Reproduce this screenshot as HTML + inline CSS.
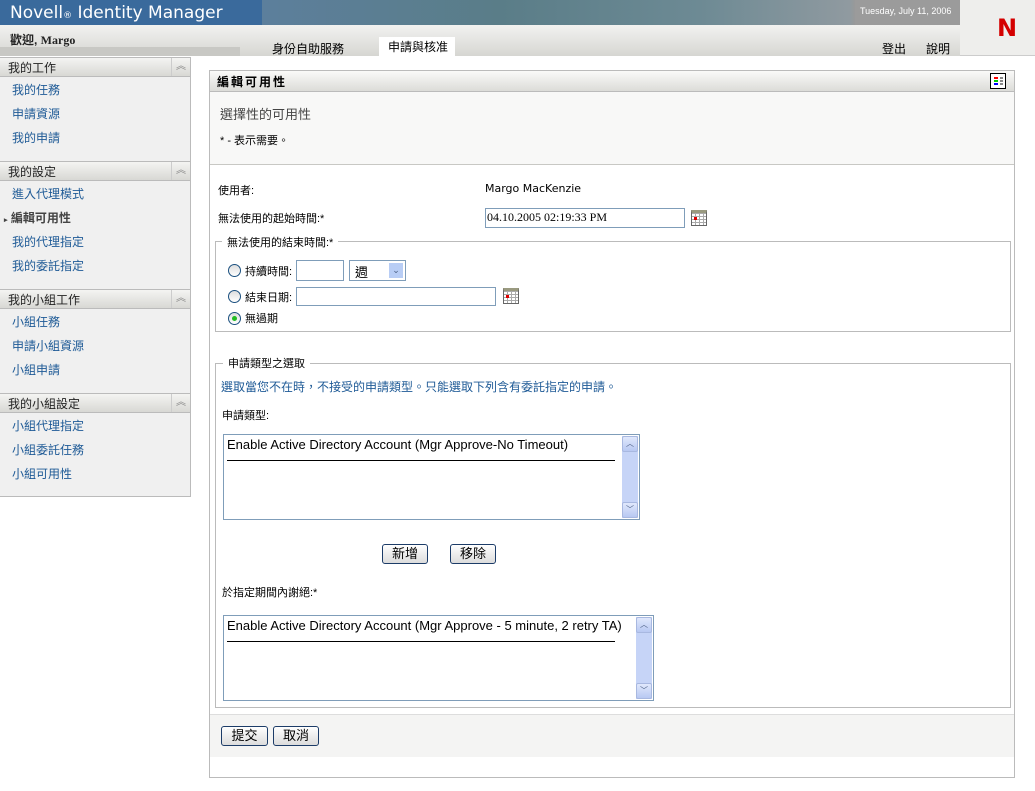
<!DOCTYPE html>
<html><head><meta charset="utf-8">
<style>
*{margin:0;padding:0;box-sizing:border-box}
body{width:1035px;height:791px;position:relative;background:#fff;font-family:"Liberation Sans","Noto Sans CJK TC",sans-serif;font-size:12px;color:#000;overflow:hidden}
.a{position:absolute;white-space:nowrap}
.lnk{color:#1e5a96}
.sh{position:absolute;left:0;width:190px;height:20px;background:linear-gradient(#f4f4f2,#d8d8d4);border-top:1px solid #bbb;border-bottom:1px solid #bbb}
.sh span{position:absolute;left:8px;top:1px;color:#222}
.sh i{position:absolute;right:0;top:0;width:19px;height:18px;border-left:1px solid #ccc;font-style:normal;color:#888;font-size:10px;text-align:center;line-height:18px}
.btn{position:absolute;height:20px;border:1px solid #1c3c68;border-radius:3px;background:linear-gradient(#fff,#dcdcdc);text-align:center;line-height:18px;font-size:13px}
.rad{position:absolute;width:13px;height:13px;border:1px solid #1c5180;border-radius:50%;background:linear-gradient(#ddd,#fff)}
.inp{position:absolute;border:1px solid #7f9db9;background:#fff}
.cal{position:absolute;width:16px;height:16px;border:1px solid #666;border-top:3px solid #9a9a80;background:repeating-linear-gradient(90deg,transparent 0 3px,#aaa 3px 4px),repeating-linear-gradient(0deg,#fff 0 2px,#aaa 2px 3px)}
.cal b{position:absolute;left:2px;top:4px;width:3px;height:3px;background:#d00}
.sb{position:absolute;right:1px;top:1px;bottom:1px;width:16px;background:#c6d4f7}
.sb .u,.sb .d{position:absolute;left:0;width:16px;height:16px;background:linear-gradient(#e0e8fc,#b8c8f2);border:1px solid #a8b8e0;border-radius:2px;color:#4d6185;font-size:8px;text-align:center;line-height:14px}
.sb .u{top:0}.sb .d{bottom:0}
</style></head><body>
<div class="a" style="left:0;top:0;width:960px;height:25px;background:linear-gradient(90deg,#3a6a9c 0,#3a6a9c 262px,#5c7f9c 262px,#5a7d88 500px,#6d8a94 700px,#909aa0 850px,#999 855px)"></div>
<div class="a" style="left:855px;top:0;width:105px;height:25px;background:#9b9b9b"></div>
<div class="a" style="left:10px;top:3px;color:#fff;font-size:17px;font-family:'DejaVu Sans',sans-serif">Novell<span style="font-size:9px">®</span> Identity Manager</div>
<div class="a" style="left:860px;top:6px;color:#fff;font-size:9px">Tuesday, July 11, 2006</div>
<div class="a" style="left:0;top:25px;width:960px;height:31px;background:linear-gradient(#f2f2f0,#d6d6d2)"></div>
<div class="a" style="left:0;top:47px;width:240px;height:9px;background:#c8c8c4"></div>
<div class="a" style="left:960px;top:0;width:75px;height:56px;background:#eeeeec;border-bottom:1px solid #ccc"></div>
<div class="a" style="left:997px;top:14px;color:#d40000;font-size:24px;font-weight:bold;font-family:'DejaVu Sans',sans-serif">N</div>
<div class="a" style="left:10px;top:31px;font-weight:bold;font-size:12px;color:#222">歡迎, <span style="font-family:'Liberation Serif',serif">Margo</span></div>
<div class="a" style="left:272px;top:40px;font-size:12px">身份自助服務</div>
<div class="a" style="left:379px;top:37px;width:76px;height:20px;background:#fff"></div>
<div class="a" style="left:388px;top:38px;font-size:12px">申請與核准</div>
<div class="a" style="left:882px;top:40px">登出</div>
<div class="a" style="left:926px;top:40px">說明</div>
<div class="a" style="left:0;top:57px;width:191px;height:440px;background:#f0f0f0;border-right:1px solid #bbb;border-bottom:1px solid #bbb"></div>
<div class="sh" style="top:57px"><span>我的工作</span><i>︽</i></div>
<div class="a lnk" style="left:12px;top:81px">我的任務</div>
<div class="a lnk" style="left:12px;top:105px">申請資源</div>
<div class="a lnk" style="left:12px;top:129px">我的申請</div>
<div class="sh" style="top:161px"><span>我的設定</span><i>︽</i></div>
<div class="a lnk" style="left:12px;top:185px">進入代理模式</div>
<div class="a" style="left:4px;top:209px;font-weight:bold;color:#444"><span style="font-size:7px">▸</span> 編輯可用性</div>
<div class="a lnk" style="left:12px;top:233px">我的代理指定</div>
<div class="a lnk" style="left:12px;top:257px">我的委託指定</div>
<div class="sh" style="top:289px"><span>我的小組工作</span><i>︽</i></div>
<div class="a lnk" style="left:12px;top:313px">小組任務</div>
<div class="a lnk" style="left:12px;top:337px">申請小組資源</div>
<div class="a lnk" style="left:12px;top:361px">小組申請</div>
<div class="sh" style="top:393px"><span>我的小組設定</span><i>︽</i></div>
<div class="a lnk" style="left:12px;top:417px">小組代理指定</div>
<div class="a lnk" style="left:12px;top:441px">小組委託任務</div>
<div class="a lnk" style="left:12px;top:465px">小組可用性</div>
<div class="a" style="left:209px;top:70px;width:806px;height:708px;border:1px solid #bbb;background:#fff"></div>
<div class="a" style="left:210px;top:71px;width:804px;height:21px;background:linear-gradient(#fafaf9,#dcdcd8);border-bottom:1px solid #bbb"></div>
<div class="a" style="left:217px;top:73px;font-weight:bold;letter-spacing:2px">編輯可用性</div>
<div class="a" style="left:990px;top:73px;width:16px;height:16px;border:1px solid #000;background:#fff">
<div class="a" style="left:3px;top:3px;width:4px;height:2px;background:#f00"></div><div class="a" style="left:9px;top:3px;width:3px;height:2px;background:#888"></div>
<div class="a" style="left:3px;top:6px;width:4px;height:2px;background:#0c0"></div><div class="a" style="left:9px;top:6px;width:3px;height:2px;background:#888"></div>
<div class="a" style="left:3px;top:9px;width:4px;height:2px;background:#00f"></div><div class="a" style="left:9px;top:9px;width:3px;height:2px;background:#888"></div></div>
<div class="a" style="left:210px;top:92px;width:804px;height:73px;background:#f8f8f7;border-bottom:1px solid #c8c8c4"></div>
<div class="a" style="left:220px;top:104px;font-size:13px;color:#444">選擇性的可用性</div>
<div class="a" style="left:220px;top:132px;font-size:11px">* - 表示需要。</div>
<div class="a" style="left:218px;top:182px;font-size:11px">使用者:</div>
<div class="a" style="left:485px;top:182px;font-size:11px;font-family:'DejaVu Sans',sans-serif">Margo MacKenzie</div>
<div class="a" style="left:218px;top:210px;font-size:11px">無法使用的起始時間:*</div>
<div class="inp" style="left:485px;top:208px;width:200px;height:20px"><span class="a" style="left:1px;top:1px;font-family:'Liberation Serif',serif;font-size:12px">04.10.2005 02:19:33 PM</span></div>
<div class="cal" style="left:691px;top:210px"><b></b></div>
<div class="a" style="left:215px;top:241px;width:796px;height:91px;border:1px solid #bbb"></div>
<div class="a" style="left:222px;top:234px;background:#fff;padding:0 5px;font-size:11px">無法使用的結束時間:*</div>
<div class="rad" style="left:228px;top:264px"></div>
<div class="a" style="left:245px;top:263px;font-size:11px">持續時間:</div>
<div class="inp" style="left:296px;top:260px;width:48px;height:21px"></div>
<div class="inp" style="left:349px;top:260px;width:57px;height:21px"><span class="a" style="left:5px;top:1px;font-size:13px">週</span><div class="a" style="right:2px;top:2px;width:14px;height:15px;background:#b8cdf5;color:#4d6185;font-size:9px;text-align:center;line-height:15px">⌄</div></div>
<div class="rad" style="left:228px;top:290px"></div>
<div class="a" style="left:245px;top:289px;font-size:11px">結束日期:</div>
<div class="inp" style="left:296px;top:287px;width:200px;height:19px"></div>
<div class="cal" style="left:503px;top:288px"><b></b></div>
<div class="rad" style="left:228px;top:312px"><div class="a" style="left:3px;top:3px;width:5px;height:5px;border-radius:50%;background:#2b2"></div></div>
<div class="a" style="left:245px;top:310px;font-size:11px">無過期</div>
<div class="a" style="left:215px;top:363px;width:796px;height:345px;border:1px solid #bbb"></div>
<div class="a" style="left:223px;top:355px;background:#fff;padding:0 5px;font-size:11px">申請類型之選取</div>
<div class="a" style="left:221px;top:378px;color:#1e5a96">選取當您不在時，不接受的申請類型。只能選取下列含有委託指定的申請。</div>
<div class="a" style="left:222px;top:407px;font-size:11px">申請類型:</div>
<div class="inp" style="left:223px;top:434px;width:417px;height:86px"><span class="a" style="left:3px;top:2px;font-size:13px">Enable Active Directory Account (Mgr Approve-No Timeout)</span><div class="a" style="left:3px;top:25px;width:388px;height:1px;background:#000"></div><div class="sb"><div class="u">︿</div><div class="d">﹀</div></div></div>
<div class="btn" style="left:382px;top:544px;width:46px">新增</div>
<div class="btn" style="left:450px;top:544px;width:46px">移除</div>
<div class="a" style="left:222px;top:584px;font-size:11px">於指定期間內謝絕:*</div>
<div class="inp" style="left:223px;top:615px;width:431px;height:86px"><span class="a" style="left:3px;top:2px;font-size:13px">Enable Active Directory Account (Mgr Approve - 5 minute, 2 retry TA)</span><div class="a" style="left:3px;top:25px;width:388px;height:1px;background:#000"></div><div class="sb"><div class="u">︿</div><div class="d">﹀</div></div></div>
<div class="a" style="left:210px;top:714px;width:804px;height:43px;background:#f4f4f3;border-top:1px solid #ddd"></div>
<div class="btn" style="left:221px;top:726px;width:47px">提交</div>
<div class="btn" style="left:273px;top:726px;width:46px">取消</div>
</body></html>
